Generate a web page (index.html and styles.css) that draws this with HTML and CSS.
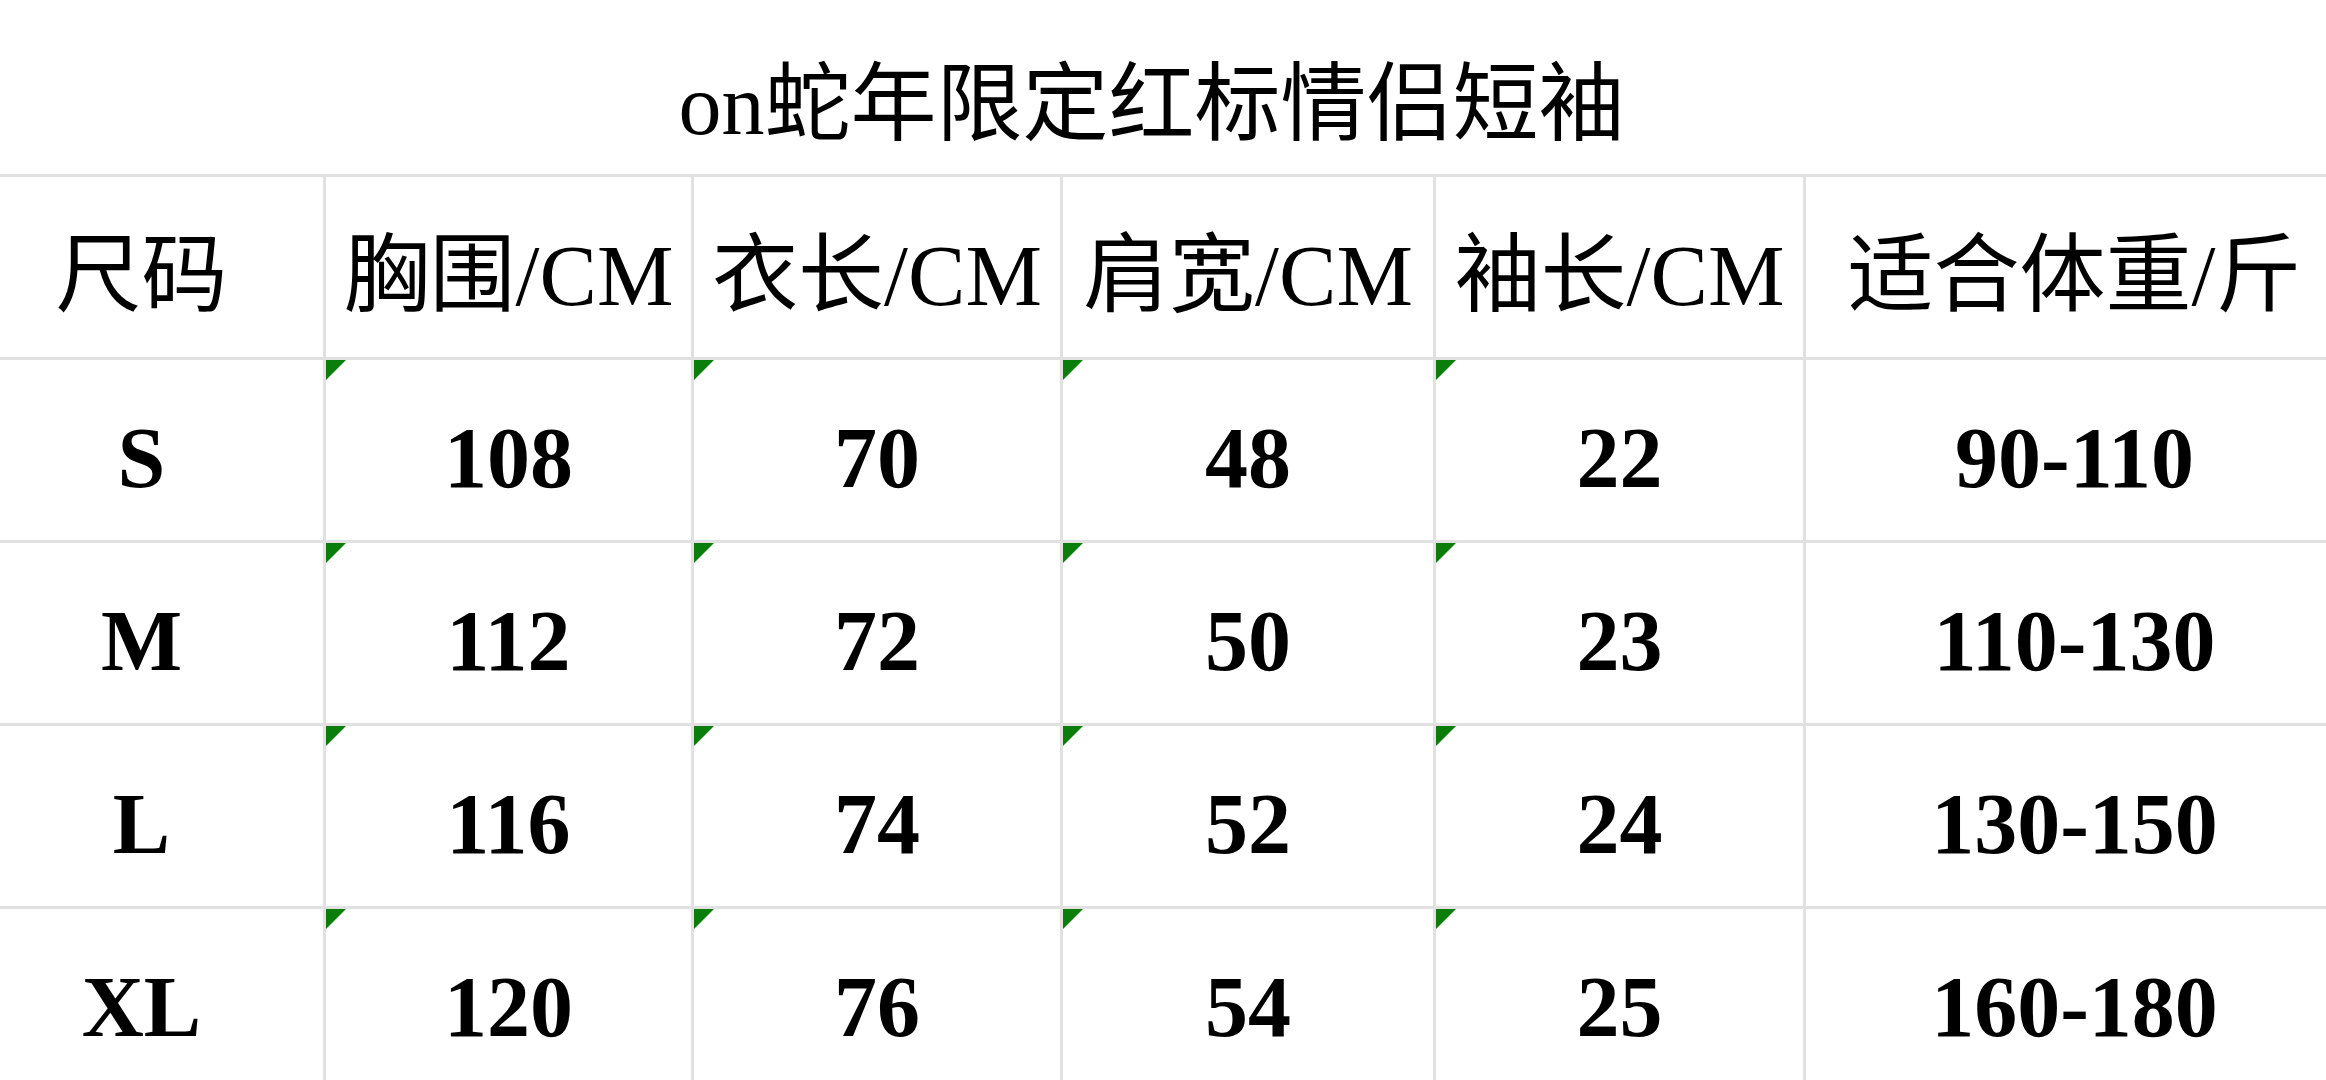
FILE: index.html
```html
<!DOCTYPE html>
<html lang="zh">
<head>
<meta charset="utf-8">
<title>on蛇年限定红标情侣短袖</title>
<link rel="stylesheet" href="styles.css">
</head>
<body>
<div class="sheet">
  <div class="title">on蛇年限定红标情侣短袖</div>
  <div class="grid">
    <div class="cell head">尺码</div>
    <div class="cell head">胸围/CM</div>
    <div class="cell head">衣长/CM</div>
    <div class="cell head">肩宽/CM</div>
    <div class="cell head">袖长/CM</div>
    <div class="cell head">适合体重/斤</div>

    <div class="cell num">S</div>
    <div class="cell num mark">108</div>
    <div class="cell num mark">70</div>
    <div class="cell num mark">48</div>
    <div class="cell num mark">22</div>
    <div class="cell num">90-110</div>

    <div class="cell num">M</div>
    <div class="cell num mark">112</div>
    <div class="cell num mark">72</div>
    <div class="cell num mark">50</div>
    <div class="cell num mark">23</div>
    <div class="cell num">110-130</div>

    <div class="cell num">L</div>
    <div class="cell num mark">116</div>
    <div class="cell num mark">74</div>
    <div class="cell num mark">52</div>
    <div class="cell num mark">24</div>
    <div class="cell num">130-150</div>

    <div class="cell num">XL</div>
    <div class="cell num mark">120</div>
    <div class="cell num mark">76</div>
    <div class="cell num mark">54</div>
    <div class="cell num mark">25</div>
    <div class="cell num">160-180</div>
  </div>
</div>
</body>
</html>
```

FILE: styles.css
```css
html, body {
  margin: 0;
  padding: 0;
  background: #ffffff;
  overflow: hidden;
}

.sheet {
  width: 2383px;
  margin-left: -40px;
  font-family: "Liberation Serif", "Noto Sans CJK SC", serif;
  color: #000000;
}

.title {
  height: 174px;
  box-sizing: border-box;
  padding-top: 36px;
  display: flex;
  align-items: center;
  justify-content: center;
  font-size: 86px;
  line-height: 1;
}

.grid {
  display: grid;
  grid-template-columns: 363px 368px 369px 373px 370px 540px;
  grid-auto-rows: 183px;
}

.cell {
  position: relative;
  box-sizing: border-box;
  border-top: 3px solid #e1e1e1;
  display: flex;
  align-items: center;
  justify-content: center;
  font-size: 86px;
  line-height: 1;
  white-space: nowrap;
}

.cell:not(:nth-child(6n+1)) {
  border-left: 3px solid #e1e1e1;
}

.head {
  padding-top: 18px;
}

.num {
  font-weight: bold;
  padding-top: 15px;
}

.mark::before {
  content: "";
  position: absolute;
  top: 0;
  left: 0;
  width: 20px;
  height: 20px;
  background: #0a7d0a;
  clip-path: polygon(0 0, 100% 0, 0 100%);
}
```
